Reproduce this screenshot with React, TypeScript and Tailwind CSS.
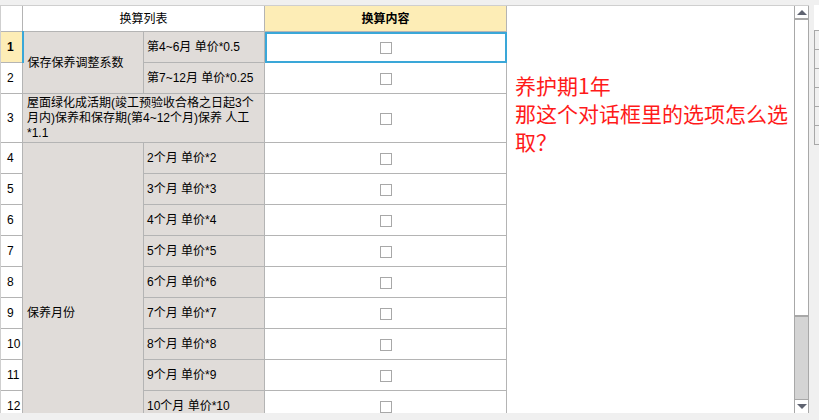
import React from 'react';

type Row = { no: number; group?: string; span?: number; item: string; full?: string };

const rows: Row[] = [
  { no: 1, group: '保存保养调整系数', span: 2, item: '第4~6月 单价*0.5' },
  { no: 2, item: '第7~12月 单价*0.25' },
  { no: 3, full: '屋面绿化成活期(竣工预验收合格之日起3个月内)保养和保存期(第4~12个月)保养 人工*1.1', item: '' },
  { no: 4, group: '保养月份', span: 11, item: '2个月 单价*2' },
  { no: 5, item: '3个月 单价*3' },
  { no: 6, item: '4个月 单价*4' },
  { no: 7, item: '5个月 单价*5' },
  { no: 8, item: '6个月 单价*6' },
  { no: 9, item: '7个月 单价*7' },
  { no: 10, item: '8个月 单价*8' },
  { no: 11, item: '9个月 单价*9' },
  { no: 12, item: '10个月 单价*10' },
  { no: 13, item: '11个月 单价*11' },
  { no: 14, item: '12个月 单价*12' },
];

const Box = () => <span className="inline-block w-[12px] h-[12px] border border-[#a8a8a8] bg-white align-middle" />;

const cell = 'border border-[#b4b4b4]';

const App = () => {
  return (
    <div
      className="w-[819px] h-[420px] bg-[#f0f0f0] pt-[5px] flex overflow-hidden text-black"
      style={{ fontFamily: '"Liberation Sans", "Noto Sans CJK SC", sans-serif' }}
    >
      <div className="w-[809px] h-[408px] bg-white border-t border-l border-[#cfcfcf] flex overflow-hidden">
        <div className="w-[506px] shrink-0 overflow-hidden">
          <table className="table-fixed border-collapse w-[506px] text-[12px] -mt-px -ml-px">
            <colgroup>
              <col className="w-[22px]" />
              <col className="w-[121px]" />
              <col className="w-[121px]" />
              <col className="w-[242px]" />
            </colgroup>
            <tbody>
              <tr className="h-[26px]">
                <td className={`${cell} bg-white`} />
                <td colSpan={2} className={`${cell} bg-white text-center`}>换算列表</td>
                <td className={`${cell} bg-[#fdedb6] text-center font-bold`}>换算内容</td>
              </tr>
              {rows.map((r) => (
                <tr key={r.no} className={r.full ? 'h-[49px]' : 'h-[31px]'}>
                  <td
                    className={`${cell} pl-[6px] pr-0 whitespace-nowrap ${
                      r.no === 1 ? 'bg-[#fdedb6] font-bold border-r-2 border-r-[#3aa7d8]' : 'bg-white'
                    }`}
                  >
                    {r.no}
                  </td>
                  {r.full ? (
                    <td colSpan={2} className={`${cell} bg-[#e0dcd9] pl-[4px] pr-[2px] leading-[15px]`}>
                      {r.full}
                    </td>
                  ) : (
                    <>
                      {r.group && (
                        <td rowSpan={r.span} className={`${cell} bg-[#e0dcd9] pl-[4px]`}>
                          {r.group}
                        </td>
                      )}
                      <td className={`${cell} bg-[#e0dcd9] pl-[3px] whitespace-nowrap`}>{r.item}</td>
                    </>
                  )}
                  <td
                    className={`${cell} text-center ${
                      r.no === 1 ? 'outline-2 -outline-offset-2 outline-[#3aa7d8]' : ''
                    }`}
                  >
                    <Box />
                  </td>
                </tr>
              ))}
            </tbody>
          </table>
        </div>
        <div
          className="flex-1 pl-[8px] pt-[65px] text-[21px] leading-[28px] text-[#ff1a1a]"
          style={{ fontFamily: '"Noto Sans CJK SC", sans-serif' }}
        >
          养护期1年
          <br />
          那这个对话框里的选项怎么选取？
        </div>
        <div className="w-[15px] shrink-0 flex flex-col border-l border-r border-[#a8a8a8] bg-[#d4d4d4]">
          <div className="h-[14px] bg-white border-b-2 border-[#a8a8a8] flex items-center justify-center">
            <span className="w-0 h-0 border-l-[5px] border-r-[5px] border-b-[5px] border-l-transparent border-r-transparent border-b-[#5f6370]" />
          </div>
          <div className="h-[297px] bg-white border-b-2 border-[#a8a8a8]" />
          <div className="flex-1" />
          <div className="h-[14px] bg-white border-t border-[#a8a8a8] flex items-center justify-center">
            <span className="w-0 h-0 border-l-[5px] border-r-[5px] border-t-[5px] border-l-transparent border-r-transparent border-t-[#5f6370]" />
          </div>
        </div>
      </div>
      <div className="ml-[5px] w-[5px] flex flex-col">
        <div className="h-[25px] bg-white" />
        {[0, 1, 2, 3, 4, 5].map((i) => (
          <div key={i} className="h-[19px] border-l border-t border-[#a8a8a8]" />
        ))}
        <div className="border-t border-[#a8a8a8]" />
      </div>
    </div>
  );
};

export default App;
